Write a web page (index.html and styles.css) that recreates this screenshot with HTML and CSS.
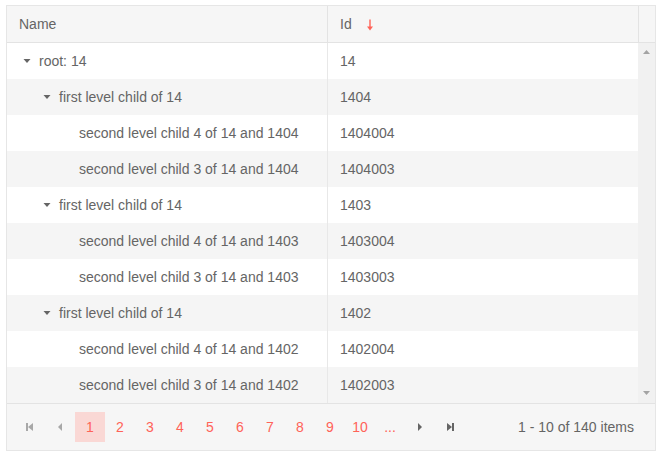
FILE: index.html
```html
<!DOCTYPE html>
<html lang="en">
<head>
  <meta charset="UTF-8">
  <meta name="viewport" content="width=device-width, initial-scale=1.0">
  <title>TreeList</title>
  <link rel="stylesheet" href="styles.css">
</head>
<body>
  <div class="treelist">
    <div class="tl-header">
      <div class="th th-name">Name</div>
      <div class="th th-id">Id
        <svg class="sort-icon" width="8" height="12" viewBox="0 0 8 12"><path d="M4 0.5V8.5" stroke="#ff6358" stroke-width="1.4"/><polygon points="1,7.5 7,7.5 4,11.5" fill="#ff6358"/></svg>
      </div>
      <div class="th-filler"></div>
    </div>

    <div class="tl-content">
      <div class="rows">
        <div class="row">
          <div class="td td-name"><span class="toggle"><svg width="16" height="16" viewBox="0 0 16 16"><polygon points="4.5,6 11.5,6 8,10"/></svg></span>root: 14</div>
          <div class="td">14</div>
        </div>
        <div class="row alt">
          <div class="td td-name"><span class="space"></span><span class="toggle"><svg width="16" height="16" viewBox="0 0 16 16"><polygon points="4.5,6 11.5,6 8,10"/></svg></span>first level child of 14</div>
          <div class="td">1404</div>
        </div>
        <div class="row">
          <div class="td td-name"><span class="space"></span><span class="space"></span><span class="space"></span>second level child 4 of 14 and 1404</div>
          <div class="td">1404004</div>
        </div>
        <div class="row alt">
          <div class="td td-name"><span class="space"></span><span class="space"></span><span class="space"></span>second level child 3 of 14 and 1404</div>
          <div class="td">1404003</div>
        </div>
        <div class="row">
          <div class="td td-name"><span class="space"></span><span class="toggle"><svg width="16" height="16" viewBox="0 0 16 16"><polygon points="4.5,6 11.5,6 8,10"/></svg></span>first level child of 14</div>
          <div class="td">1403</div>
        </div>
        <div class="row alt">
          <div class="td td-name"><span class="space"></span><span class="space"></span><span class="space"></span>second level child 4 of 14 and 1403</div>
          <div class="td">1403004</div>
        </div>
        <div class="row">
          <div class="td td-name"><span class="space"></span><span class="space"></span><span class="space"></span>second level child 3 of 14 and 1403</div>
          <div class="td">1403003</div>
        </div>
        <div class="row alt">
          <div class="td td-name"><span class="space"></span><span class="toggle"><svg width="16" height="16" viewBox="0 0 16 16"><polygon points="4.5,6 11.5,6 8,10"/></svg></span>first level child of 14</div>
          <div class="td">1402</div>
        </div>
        <div class="row">
          <div class="td td-name"><span class="space"></span><span class="space"></span><span class="space"></span>second level child 4 of 14 and 1402</div>
          <div class="td">1402004</div>
        </div>
        <div class="row alt">
          <div class="td td-name"><span class="space"></span><span class="space"></span><span class="space"></span>second level child 3 of 14 and 1402</div>
          <div class="td">1402003</div>
        </div>
      </div>
      <div class="scrollbar">
        <svg width="17" height="8" viewBox="0 0 17 8"><polygon points="5,6 12,6 8.5,2"/></svg>
        <svg width="17" height="8" viewBox="0 0 17 8"><polygon points="5,2 12,2 8.5,6"/></svg>
      </div>
    </div>

    <div class="pager">
      <span class="pg-btn pg-disabled"><svg width="16" height="16" viewBox="0 0 16 16"><rect x="4" y="4" width="2" height="8"/><polygon points="11,4 11,12 6,8"/></svg></span>
      <span class="pg-btn pg-disabled"><svg width="16" height="16" viewBox="0 0 16 16"><polygon points="10,4 10,12 6,8"/></svg></span>
      <span class="pg-btn pg-num pg-selected">1</span>
      <span class="pg-btn pg-num">2</span>
      <span class="pg-btn pg-num">3</span>
      <span class="pg-btn pg-num">4</span>
      <span class="pg-btn pg-num">5</span>
      <span class="pg-btn pg-num">6</span>
      <span class="pg-btn pg-num">7</span>
      <span class="pg-btn pg-num">8</span>
      <span class="pg-btn pg-num">9</span>
      <span class="pg-btn pg-num">10</span>
      <span class="pg-btn pg-num">...</span>
      <span class="pg-btn"><svg width="16" height="16" viewBox="0 0 16 16"><polygon points="6,4 6,12 10,8"/></svg></span>
      <span class="pg-btn"><svg width="16" height="16" viewBox="0 0 16 16"><polygon points="5,4 5,12 10,8"/><rect x="10" y="4" width="2" height="8"/></svg></span>
      <span class="pg-info">1 - 10 of 140 items</span>
    </div>
  </div>
</body>
</html>
```

FILE: styles.css
```css
body {
  margin: 0;
  font-family: "Liberation Sans", Arial, sans-serif;
  font-size: 14px;
  color: #656565;
  background-color: #fff;
}
.treelist {
  width: 650px;
  margin: 5px 0 0 6px;
  border: 1px solid #e6e6e6;
  box-sizing: border-box;
}
.tl-header {
  display: grid;
  grid-template-columns: 321px 310px 17px;
  background-color: #f6f6f6;
  border-bottom: 1px solid #e3e3e3;
}
.th {
  height: 36px;
  padding: 0 12px;
  display: flex;
  align-items: center;
  box-sizing: border-box;
}
.th-name {
  border-right: 1px solid #e3e3e3;
}
.sort-icon {
  margin-left: 14px;
  margin-top: 2px;
}
.th-filler {
  border-left: 1px solid #e3e3e3;
}
.tl-content {
  display: flex;
}
.rows {
  width: 631px;
}
.row {
  display: grid;
  grid-template-columns: 321px 310px;
  height: 36px;
}
.row.alt {
  background-color: #f5f5f5;
}
.td {
  padding: 0 12px;
  display: flex;
  align-items: center;
  box-sizing: border-box;
  white-space: nowrap;
}
.td-name {
  border-right: 1px solid #e8e8e8;
}
.toggle, .space {
  display: inline-block;
  width: 16px;
  height: 16px;
  margin-right: 4px;
  flex-shrink: 0;
}
.toggle svg {
  display: block;
  fill: #656565;
}
.scrollbar {
  width: 17px;
  background-color: #f1f1f1;
  display: flex;
  flex-direction: column;
  justify-content: space-between;
  padding: 5px 0 6px;
  box-sizing: border-box;
}
.scrollbar svg {
  display: block;
  fill: #a3a3a3;
}
.pager {
  display: flex;
  align-items: center;
  padding: 8px 8px;
  background-color: #f6f6f6;
  border-top: 1px solid #e3e3e3;
}
.pg-btn {
  width: 30px;
  height: 30px;
  display: flex;
  align-items: center;
  justify-content: center;
  fill: #656565;
}
.pg-disabled {
  fill: #a8a8a8;
}
.pg-num {
  color: #ff6358;
  font-size: 14px;
}
.pg-selected {
  background-color: #fad8d5;
}
.pg-info {
  margin-left: auto;
  padding-right: 13px;
}
```
